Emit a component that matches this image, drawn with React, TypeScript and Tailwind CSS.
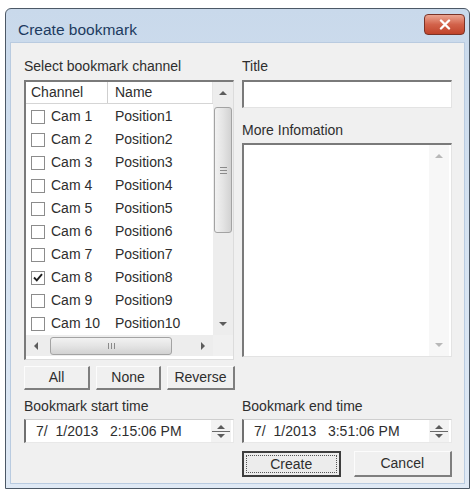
import React from "react";

const rows = Array.from({ length: 10 }, (_, i) => ({
  cam: `Cam ${i + 1}`,
  name: `Position${i + 1}`,
  checked: i === 7,
}));

function Arrow({ dir, faint = false }: { dir: "up" | "down" | "left" | "right"; faint?: boolean }) {
  const pts = {
    up: "0,5 4,1 8,5",
    down: "0,1 4,5 8,1",
    left: "5,0 1,4 5,8",
    right: "1,0 5,4 1,8",
  }[dir];
  const vert = dir === "up" || dir === "down";
  return (
    <svg width={vert ? 8 : 6} height={vert ? 6 : 8} viewBox={vert ? "0 0 8 6" : "0 0 6 8"}>
      <polygon points={pts} fill={faint ? "#b8b8b8" : "#5c5c5c"} />
    </svg>
  );
}

function Checkbox({ checked }: { checked: boolean }) {
  return (
    <div className="w-[14px] h-[14px] border-[1.5px] border-[#8c8c8c] bg-white flex items-center justify-center shrink-0">
      {checked && (
        <svg width="10" height="9" viewBox="0 0 10 9">
          <path d="M1 4.5 L3.8 7.3 L9 1.2" stroke="#1e1e1e" strokeWidth="1.9" fill="none" />
        </svg>
      )}
    </div>
  );
}

function PushButton({ children, className = "" }: { children: React.ReactNode; className?: string }) {
  return (
    <div
      className={`flex items-center justify-center bg-[#f0f0f0] border-t border-l border-t-[#fcfcfc] border-l-[#fcfcfc] border-r-2 border-b-2 border-r-[#7e7e7e] border-b-[#7e7e7e] text-[14px] text-[#2e2e2e] ${className}`}
    >
      {children}
    </div>
  );
}

function DatePicker({ value }: { value: string }) {
  return (
    <div className="h-[24px] flex bg-white border-l-2 border-t border-l-[#707070] border-t-[#cfcfcf] border-b border-r border-b-[#e8e8e8] border-r-[#e8e8e8]">
      <div className="flex-1 pl-[10px] flex items-center text-[14px] text-[#2e2e2e] whitespace-pre">{value}</div>
      <div className="w-[20px] mr-[2px] flex flex-col items-center justify-center gap-[1px] bg-[#f2f2f2]">
        <Arrow dir="up" />
        <div className="w-[18px] h-px bg-[#6a6a6a]" />
        <Arrow dir="down" />
      </div>
    </div>
  );
}

export default function App() {
  return (
    <div className="w-[473px] h-[490px] bg-white pt-[8px] pl-[5px] font-['Liberation_Sans',Arial,sans-serif]">
      <div className="w-[465px] h-[481px] border border-[#4c5866] rounded-t-[6px] bg-gradient-to-b from-[#c9d9eb] via-[#d6e3f1] to-[#dfe9f5] flex flex-col px-[4px] pb-[4px]">
        {/* title bar */}
        <div className="h-[33px] flex items-start justify-between shrink-0">
          <div className="mt-[9px] ml-[8px] text-[15.5px] text-[#1d3a60]">Create bookmark</div>
          <div className="mt-[5px] w-[41px] h-[21px] rounded-[4px] border border-[#7a3327] bg-gradient-to-b from-[#eba592] via-[#d2624a] to-[#c0432a] flex items-center justify-center">
            <svg width="12" height="11" viewBox="0 0 12 11">
              <path d="M2 1.5 L10 9.5 M10 1.5 L2 9.5" stroke="#ffffff" strokeWidth="2.4" strokeLinecap="round" />
            </svg>
          </div>
        </div>

        {/* client area */}
        <div className="flex-1 bg-[#f0f0f0] border border-[#b9cbe0] pl-[13px] pr-[12px]">
          <div className="flex gap-[8px] mt-[15px]">
            {/* left column */}
            <div className="w-[210px]">
              <div className="h-[16px] leading-[16px] text-[14px] text-[#2e2e2e]">Select bookmark channel</div>
              <div className="mt-[6px] h-[280px] bg-white border-t-2 border-l-2 border-t-[#7a7a7a] border-l-[#7a7a7a] border-r border-b border-r-[#dcdcdc] border-b-[#dcdcdc] flex flex-col">
                <div className="flex">
                  <div className="flex-1">
                    <div className="h-[22px] flex bg-white border-b border-[#d5d5d5] text-[14px] text-[#2e2e2e]">
                      <div className="w-[82px] pl-[5px] flex items-center border-r border-[#cfcfcf]">Channel</div>
                      <div className="flex-1 pl-[7px] flex items-center border-r border-[#e5e5e5]">Name</div>
                    </div>
                    <div className="pt-[1px]">
                      {rows.map((r) => (
                        <div key={r.cam} className="h-[23px] flex items-center text-[14px] text-[#2e2e2e]">
                          <div className="w-[82px] pl-[5px] flex items-center gap-[6px]">
                            <Checkbox checked={r.checked} />
                            <span>{r.cam}</span>
                          </div>
                          <div className="pl-[7px]">{r.name}</div>
                        </div>
                      ))}
                    </div>
                  </div>
                  {/* vertical scrollbar */}
                  <div className="w-[20px] bg-[#ededed] flex flex-col items-center">
                    <div className="h-[22px] flex items-center justify-center">
                      <Arrow dir="up" />
                    </div>
                    <div className="mt-[3px] w-[18px] h-[126px] rounded-[3px] border border-[#a3a3a3] bg-gradient-to-r from-[#f2f2f2] via-[#e4e4e4] to-[#d2d2d2] flex flex-col items-center justify-center gap-[2px]">
                      <div className="w-[7px] h-px bg-[#8a8a8a]" />
                      <div className="w-[7px] h-px bg-[#8a8a8a]" />
                      <div className="w-[7px] h-px bg-[#8a8a8a]" />
                    </div>
                    <div className="flex-1" />
                    <div className="h-[22px] flex items-center justify-center">
                      <Arrow dir="down" />
                    </div>
                  </div>
                </div>
                {/* horizontal scrollbar */}
                <div className="h-[21px] flex">
                  <div className="flex-1 bg-[#ededed] flex items-center">
                    <div className="w-[20px] flex justify-center">
                      <Arrow dir="left" />
                    </div>
                    <div className="ml-[4px] w-[122px] h-[18px] rounded-[3px] border border-[#a3a3a3] bg-gradient-to-b from-[#f2f2f2] via-[#e4e4e4] to-[#d2d2d2] flex items-center justify-center gap-[2px]">
                      <div className="w-px h-[6px] bg-[#8a8a8a]" />
                      <div className="w-px h-[6px] bg-[#8a8a8a]" />
                      <div className="w-px h-[6px] bg-[#8a8a8a]" />
                    </div>
                    <div className="flex-1" />
                    <div className="w-[20px] flex justify-center">
                      <Arrow dir="right" />
                    </div>
                  </div>
                  <div className="w-[20px] bg-[#f0f0f0]" />
                </div>
              </div>
            </div>

            {/* right column */}
            <div className="w-[210px]">
              <div className="h-[16px] leading-[16px] text-[14px] text-[#2e2e2e]">Title</div>
              <div className="mt-[6px] h-[28px] bg-white border-t-2 border-l-2 border-t-[#7a7a7a] border-l-[#7a7a7a] border-r border-b border-r-[#e3e3e3] border-b-[#e3e3e3]" />
              <div className="mt-[14px] h-[16px] leading-[16px] text-[14px] text-[#2e2e2e]">More Infomation</div>
              <div className="mt-[5px] h-[214px] bg-white border-t-2 border-l-2 border-t-[#7a7a7a] border-l-[#7a7a7a] border-r border-b border-r-[#e3e3e3] border-b-[#e3e3e3] flex justify-end">
                <div className="w-[20px] mr-[2px] bg-[#f7f7f7] flex flex-col items-center justify-between py-[8px]">
                  <Arrow dir="up" faint />
                  <Arrow dir="down" faint />
                </div>
              </div>
            </div>
          </div>

          {/* All / None / Reverse */}
          <div className="mt-[6px] w-[211px] h-[24px] flex gap-[6px]">
            <PushButton className="w-[66px]">All</PushButton>
            <PushButton className="w-[65px]">None</PushButton>
            <PushButton className="flex-1">Reverse</PushButton>
          </div>

          {/* times */}
          <div className="mt-[8px] flex gap-[8px]">
            <div className="w-[210px]">
              <div className="h-[16px] leading-[16px] text-[14px] text-[#2e2e2e]">Bookmark start time</div>
              <div className="mt-[5px]">
                <DatePicker value={"7/  1/2013   2:15:06 PM"} />
              </div>
            </div>
            <div className="w-[210px]">
              <div className="h-[16px] leading-[16px] text-[14px] text-[#2e2e2e]">Bookmark end time</div>
              <div className="mt-[5px]">
                <DatePicker value={"7/  1/2013   3:51:06 PM"} />
              </div>
            </div>
          </div>

          {/* Create / Cancel */}
          <div className="mt-[8px] flex pl-[218px] gap-[13px]">
            <div className="w-[99px] h-[26px] border-2 border-[#3e3e3e] bg-[#ececec] p-[2px]">
              <div className="w-full h-full border border-dotted border-[#555] flex items-center justify-center text-[14px] text-[#2e2e2e]">
                Create
              </div>
            </div>
            <PushButton className="w-[99px] h-[26px]">Cancel</PushButton>
          </div>
        </div>
      </div>
    </div>
  );
}
